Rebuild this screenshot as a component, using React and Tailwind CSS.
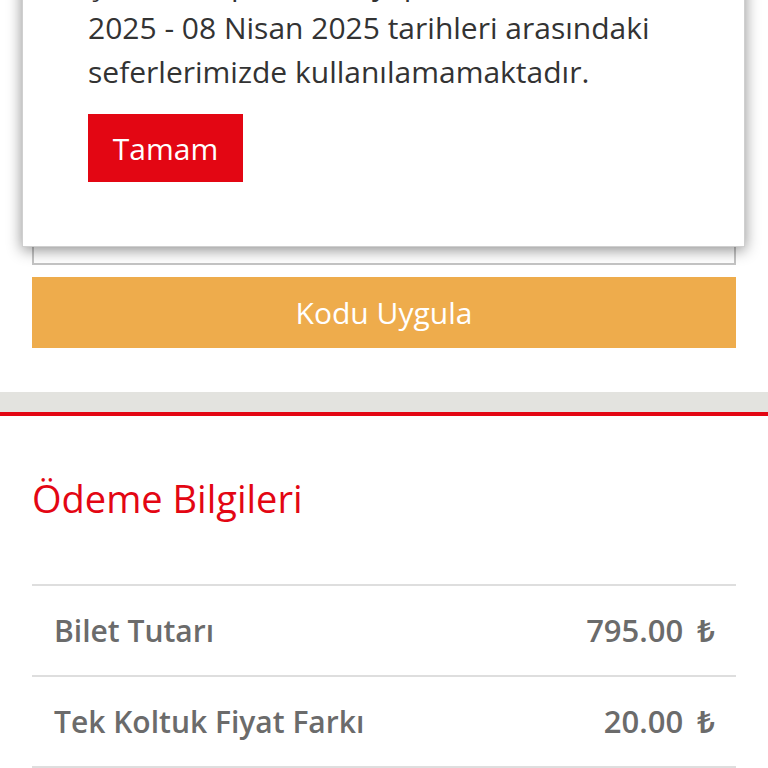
export default function App() {
  const rows = [
    { label: "Bilet Tutarı", amount: "795.00" },
    { label: "Tek Koltuk Fiyat Farkı", amount: "20.00" },
    { label: "Hizmet Bedeli", amount: "0.00" },
  ];

  return (
    <div
      className="relative min-h-screen bg-white overflow-hidden"
      style={{ fontFamily: '"Open Sans", "Noto Sans", sans-serif' }}
    >
      {/* page behind the popup */}
      <div className="px-8 pt-[127px]">
        <p className="text-[24px] text-[#555] mb-[40px]">İndirim Kodu</p>
        <div className="h-[62px] border-2 border-[#c4c4c4] bg-white"></div>
        <button className="mt-[12px] w-full h-[71px] bg-[#eeac4c] text-white text-[30px]">
          Kodu Uygula
        </button>
      </div>

      <div className="mt-[44px] h-[20px] bg-[#e3e3df]"></div>
      <div className="h-[4px] bg-[#e30613]"></div>

      <div className="px-8 pt-[56px]">
        <h2 className="text-[38px] leading-[52px] text-[#e30613]">Ödeme Bilgileri</h2>
        <div className="mt-[60px]">
          {rows.map((r) => (
            <div key={r.label} className="grid grid-cols-2 border-t-2 border-[#dedede] h-[91px]">
              <div className="flex items-center pl-[22px] text-[30px] font-semibold text-[#6b6b6b]">
                {r.label}
              </div>
              <div className="flex items-center justify-end pr-[21px] text-[30px] font-semibold text-[#6b6b6b]">
                <span className="text-[31px]">{r.amount}</span>
                <span className="ml-[14px] text-[31px]">₺</span>
              </div>
            </div>
          ))}
        </div>
      </div>

      {/* popup */}
      <div className="absolute left-[22px] w-[723px] top-[-60px] bg-white border border-[#cfcfcf] shadow-[0_3px_14px_rgba(0,0,0,0.45)] pl-[65px] pr-[30px] pt-[21px] pb-[64px]">
        <p className="text-[30px] leading-[44px] text-[#333]">
          Şu anki kupon kodu yapılan 28 Mart
          <br />
          2025 - 08 Nisan 2025 tarihleri arasındaki
          <br />
          seferlerimizde kullanılamamaktadır.
        </p>
        <button className="mt-[20px] w-[155px] h-[68px] bg-[#e30613] text-white text-[30px]">
          Tamam
        </button>
      </div>
    </div>
  );
}
